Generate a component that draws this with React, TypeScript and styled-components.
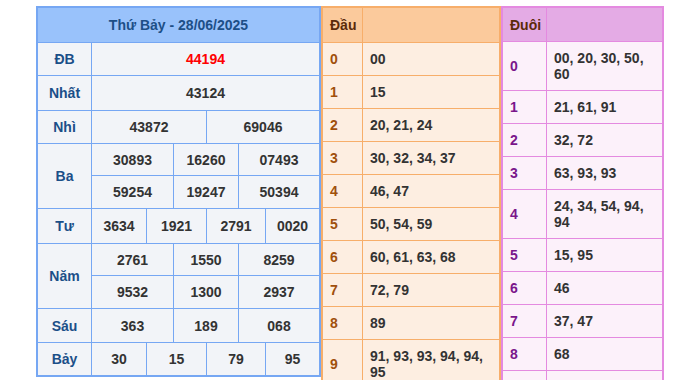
import React from "react";
import styled, { createGlobalStyle } from "styled-components";

const GlobalStyle = createGlobalStyle`
  html, body {
    margin: 0;
    padding: 0;
    background: #ffffff;
    font-family: "Liberation Sans", Arial, sans-serif;
  }
  * { box-sizing: border-box; }
`;

const Page = styled.div`
  display: flex;
  justify-content: center;
  align-items: flex-start;
  padding-top: 6px;
`;

/* ---------- Result table (left) ---------- */
const ResultTable = styled.div`
  width: 285px;
  border: 2px solid #76a7f3;
  background: #f2f4f8;
  font-size: 14px;
  font-weight: 700;
`;

const ResultHeader = styled.div`
  height: 35px;
  border-bottom: 1px solid #76a7f3;
  background: #99c2fb;
  color: #1d4f87;
  display: flex;
  align-items: center;
  justify-content: center;
`;

const PrizeRow = styled.div`
  display: flex;
  border-bottom: 1px solid #76a7f3;
  &:last-child { border-bottom: none; }
`;

const PrizeLabel = styled.div`
  width: 54px;
  flex: none;
  border-right: 1px solid #76a7f3;
  color: #1b4f88;
  display: flex;
  align-items: center;
  justify-content: center;
`;

const PrizeValues = styled.div`
  flex: 1;
  display: flex;
  flex-direction: column;
`;

const ValueLine = styled.div<{ $cols: string; $h: number }>`
  display: grid;
  grid-template-columns: ${(p) => p.$cols};
  height: ${(p) => p.$h}px;
  border-bottom: 1px solid #76a7f3;
  &:last-child { border-bottom: none; }
`;

const ValueCell = styled.div<{ $red?: boolean }>`
  display: flex;
  align-items: center;
  justify-content: center;
  color: ${(p) => (p.$red ? "#ff0000" : "#333333")};
  border-right: 1px solid #76a7f3;
  &:last-child { border-right: none; }
`;

/* ---------- Loto tables (middle/right) ---------- */
type Theme = {
  border: string;
  head: string;
  body: string;
  headText: string;
  key: string;
};

const orange: Theme = {
  border: "#f7ae6a",
  head: "#fbca9c",
  body: "#fdeee1",
  headText: "#5b2a0a",
  key: "#a0500c",
};

const pink: Theme = {
  border: "#e48ae0",
  head: "#e4abe5",
  body: "#fcf1fa",
  headText: "#5b2a0a",
  key: "#7a168b",
};

const LotoTable = styled.div<{ $t: Theme; $w: number }>`
  width: ${(p) => p.$w}px;
  border: 2px solid ${(p) => p.$t.border};
  background: ${(p) => p.$t.body};
  font-size: 14px;
  font-weight: 700;
  line-height: 16px;
`;

const LotoRow = styled.div<{ $t: Theme; $key: number }>`
  display: grid;
  grid-template-columns: ${(p) => p.$key}px 1fr;
  border-bottom: 1px solid ${(p) => p.$t.border};
`;

const LotoHeadRow = styled(LotoRow)<{ $h: number }>`
  height: ${(p) => p.$h}px;
  background: ${(p) => p.$t.head};
  color: ${(p) => p.$t.headText};
`;

const KeyCell = styled.div<{ $t: Theme }>`
  padding: 8px 7px;
  border-right: 1px solid ${(p) => p.$t.border};
  color: ${(p) => p.$t.key};
  display: flex;
  align-items: center;
`;

const HeadKeyCell = styled(KeyCell)`
  color: inherit;
`;

const ListCell = styled.div`
  padding: 8px 7px;
  color: #333333;
  display: flex;
  align-items: center;
`;

const prizes: { label: string; lines: { cols: string; h: number; vals: string[]; red?: boolean }[] }[] = [
  { label: "ĐB", lines: [{ cols: "1fr", h: 32, vals: ["44194"], red: true }] },
  { label: "Nhất", lines: [{ cols: "1fr", h: 34, vals: ["43124"] }] },
  { label: "Nhì", lines: [{ cols: "115px 1fr", h: 32, vals: ["43872", "69046"] }] },
  {
    label: "Ba",
    lines: [
      { cols: "82px 65px 1fr", h: 32, vals: ["30893", "16260", "07493"] },
      { cols: "82px 65px 1fr", h: 32, vals: ["59254", "19247", "50394"] },
    ],
  },
  { label: "Tư", lines: [{ cols: "55px 60px 59px 1fr", h: 34, vals: ["3634", "1921", "2791", "0020"] }] },
  {
    label: "Năm",
    lines: [
      { cols: "82px 65px 1fr", h: 32, vals: ["2761", "1550", "8259"] },
      { cols: "82px 65px 1fr", h: 32, vals: ["9532", "1300", "2937"] },
    ],
  },
  { label: "Sáu", lines: [{ cols: "82px 65px 1fr", h: 33, vals: ["363", "189", "068"] }] },
  { label: "Bảy", lines: [{ cols: "55px 60px 59px 1fr", h: 32, vals: ["30", "15", "79", "95"] }] },
];

const dau = [
  "00",
  "15",
  "20, 21, 24",
  "30, 32, 34, 37",
  "46, 47",
  "50, 54, 59",
  "60, 61, 63, 68",
  "72, 79",
  "89",
  "91, 93, 93, 94, 94, 95",
];

const duoi = [
  "00, 20, 30, 50, 60",
  "21, 61, 91",
  "32, 72",
  "63, 93, 93",
  "24, 34, 54, 94, 94",
  "15, 95",
  "46",
  "37, 47",
  "68",
  "59, 79, 89",
];

function Loto({ title, rows, t, w, keyW, headH }: { title: string; rows: string[]; t: Theme; w: number; keyW: number; headH: number }) {
  return (
    <LotoTable $t={t} $w={w}>
      <LotoHeadRow $t={t} $key={keyW} $h={headH}>
        <HeadKeyCell $t={t}>{title}</HeadKeyCell>
        <ListCell />
      </LotoHeadRow>
      {rows.map((r, i) => (
        <LotoRow key={i} $t={t} $key={keyW}>
          <KeyCell $t={t}>{i}</KeyCell>
          <ListCell>{r}</ListCell>
        </LotoRow>
      ))}
    </LotoTable>
  );
}

export default function App() {
  return (
    <>
      <GlobalStyle />
      <Page>
        <ResultTable>
          <ResultHeader>Thứ Bảy - 28/06/2025</ResultHeader>
          {prizes.map((p) => (
            <PrizeRow key={p.label}>
              <PrizeLabel>{p.label}</PrizeLabel>
              <PrizeValues>
                {p.lines.map((l, i) => (
                  <ValueLine key={i} $cols={l.cols} $h={l.h}>
                    {l.vals.map((v, j) => (
                      <ValueCell key={j} $red={l.red}>
                        {v}
                      </ValueCell>
                    ))}
                  </ValueLine>
                ))}
              </PrizeValues>
            </PrizeRow>
          ))}
        </ResultTable>
        <Loto title="Đầu" rows={dau} t={orange} w={180} keyW={40} headH={35} />
        <Loto title="Đuôi" rows={duoi} t={pink} w={163} keyW={44} headH={34} />
      </Page>
    </>
  );
}
